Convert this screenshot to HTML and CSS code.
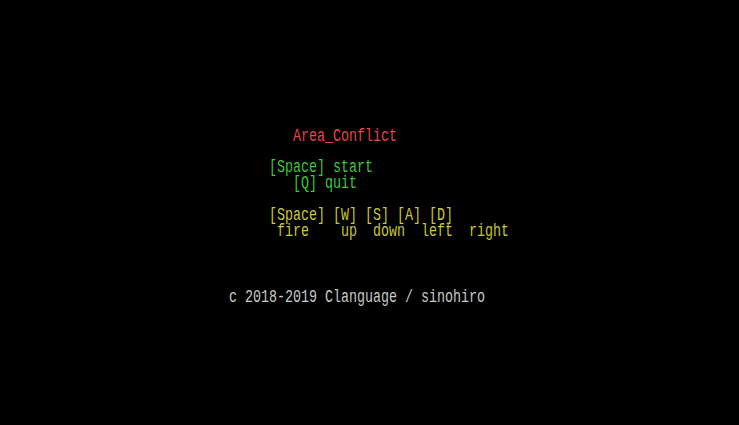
FILE: index.html
```html
<!DOCTYPE html>
<html>
<head>
<meta charset="utf-8">
<link rel="stylesheet" href="styles.css">
</head>
<body>
<div class="screen">
  <div class="console">
    <div class="line red">        Area_Conflict</div>
    <div class="group">
      <div class="line green">     [Space] start</div>
      <div class="line green">        [Q] quit</div>
    </div>
    <div class="group">
      <div class="line yellow">     [Space] [W] [S] [A] [D]</div>
      <div class="line yellow">      fire    up  down  left  right</div>
    </div>
    <div class="group far">
      <div class="line grey">c 2018-2019 Clanguage / sinohiro</div>
    </div>
  </div>
</div>
</body>
</html>
```
FILE: styles.css
```css
html, body {
  margin: 0;
  padding: 0;
  background: #000;
}
.screen {
  width: 739px;
  height: 425px;
  overflow: hidden;
  background: #000;
  box-sizing: border-box;
  padding-top: 128px;
  padding-left: 229px;
}
.console {
  font-family: "Liberation Mono", monospace;
  font-size: 19px;
  line-height: 16px;
  transform: scaleX(0.7017);
  transform-origin: left top;
}
.line {
  white-space: pre;
  height: 16px;
}
.group {
  margin-top: 15px;
}
.group + .group {
  margin-top: 16px;
}
.group.far {
  margin-top: 50px;
}
.red { color: #e04848; }
.green { color: #3cc83c; }
.yellow { color: #c8c832; }
.grey { color: #c8c8c8; }
```
